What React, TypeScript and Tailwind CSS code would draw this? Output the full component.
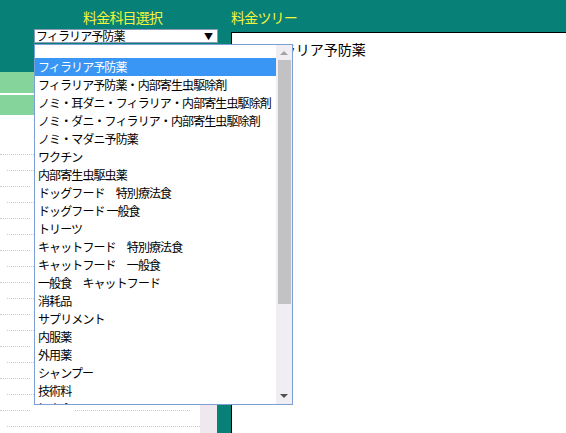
import type { ReactNode } from "react";

const FONT = "font-['Noto_Sans_CJK_JP','Noto_Sans',sans-serif]";

const ITEMS = [
  "フィラリア予防薬",
  "フィラリア予防薬・内部寄生虫駆除剤",
  "ノミ・耳ダニ・フィラリア・内部寄生虫駆除剤",
  "ノミ・ダニ・フィラリア・内部寄生虫駆除剤",
  "ノミ・マダニ予防薬",
  "ワクチン",
  "内部寄生虫駆虫薬",
  "ドッグフード　特別療法食",
  "ドッグフード 一般食",
  "トリーツ",
  "キャットフード　特別療法食",
  "キャットフード　一般食",
  "一般食　キャットフード",
  "消耗品",
  "サプリメント",
  "内服薬",
  "外用薬",
  "シャンプー",
  "技術料",
  "処方食",
];

function Label(props: { children: ReactNode; className?: string }) {
  return (
    <div
      className={`h-[19px] text-[14px] leading-[19px] tracking-[-0.8px] text-[#f4f43a] ${props.className ?? ""}`}
    >
      {props.children}
    </div>
  );
}

function GridRows() {
  const rows = Array.from({ length: 17 }, (_, i) => i);
  return (
    <div className="flex flex-col">
      <div className="h-[40px] border-b border-dotted border-[#c9c6d6]" />
      {rows.map((i) =>
        i % 2 === 0 ? (
          <div key={i} className="flex h-[16px]">
            <div className="ml-[7px] flex-1 border-b border-dotted border-[#c6cadb]" />
          </div>
        ) : (
          <div key={i} className="flex h-[16px] gap-[8px]">
            <div className="w-[30px] border-b border-dotted border-[#d6c8d2]" />
            <div className="ml-[37px] mr-[10px] flex-1 border-b border-dotted border-[#d6c8d2]" />
          </div>
        ),
      )}
    </div>
  );
}

function Dropdown() {
  return (
    <div
      className={`absolute left-[34px] top-[44px] flex h-[361px] w-[259px] overflow-hidden border border-[#7d9fd6] bg-white ${FONT}`}
    >
      <div className="flex min-w-0 flex-1 flex-col">
        <div className="h-[13px] shrink-0" />
        {ITEMS.map((item, i) => (
          <div
            key={item}
            className={`h-[18px] shrink-0 whitespace-nowrap pl-[3px] text-[12px] leading-[18px] tracking-[-0.9px] ${
              i === 0 ? "bg-[#3a96f4] text-white" : "text-black"
            }`}
          >
            {item}
          </div>
        ))}
      </div>
      <div className="flex w-[16px] shrink-0 flex-col items-center bg-[#f0eef3]">
        <div className="flex h-[15px] w-full items-center justify-center">
          <div className="h-0 w-0 border-x-[4px] border-b-[4px] border-x-transparent border-b-[#a3a3a3]" />
        </div>
        <div className="h-[244px] w-[13px] bg-[#c2c1c3]" />
        <div className="flex-1" />
        <div className="flex h-[17px] w-full items-center justify-center">
          <div className="h-0 w-0 border-x-[4px] border-t-[4px] border-x-transparent border-t-[#505050]" />
        </div>
      </div>
    </div>
  );
}

export default function App() {
  return (
    <div className={`relative flex h-[433px] w-[566px] overflow-hidden bg-[#078078] ${FONT}`}>
      <div className="flex w-[217px] shrink-0 flex-col pt-[8px]">
        <Label className="pl-[83px]">料金科目選択</Label>
        <div className="ml-[34px] mt-[2px] flex h-[14px] w-[184px] items-center justify-between border border-[#8a9ab8] bg-white pl-[1px] pr-[4px]">
          <span className="text-[12px] leading-[12px] tracking-[-0.9px] text-black">
            フィラリア予防薬
          </span>
          <span className="text-[9px] leading-[9px] text-black">▼</span>
        </div>
        <div className="mt-[29px] flex min-h-0 flex-1 flex-col">
          <div className="h-[21px] bg-[#84d49c]" />
          <div className="h-[2px] bg-white" />
          <div className="h-[20px] bg-[#84d49c]" />
          <div className="flex min-h-0 flex-1 bg-white">
            <div className="w-[200px]">
              <GridRows />
            </div>
            <div className="flex-1 bg-[#efe9ef]" />
          </div>
        </div>
      </div>
      <div className="w-[14px] shrink-0" />
      <div className="flex min-w-0 flex-1 flex-col pt-[8px]">
        <Label>料金ツリー</Label>
        <div className="mt-[5px] flex-1 border-l border-t border-black bg-white pl-[22px] pt-[7px]">
          <div className="text-[14px] leading-[18px] text-black">フィラリア予防薬</div>
        </div>
      </div>
      <Dropdown />
    </div>
  );
}
